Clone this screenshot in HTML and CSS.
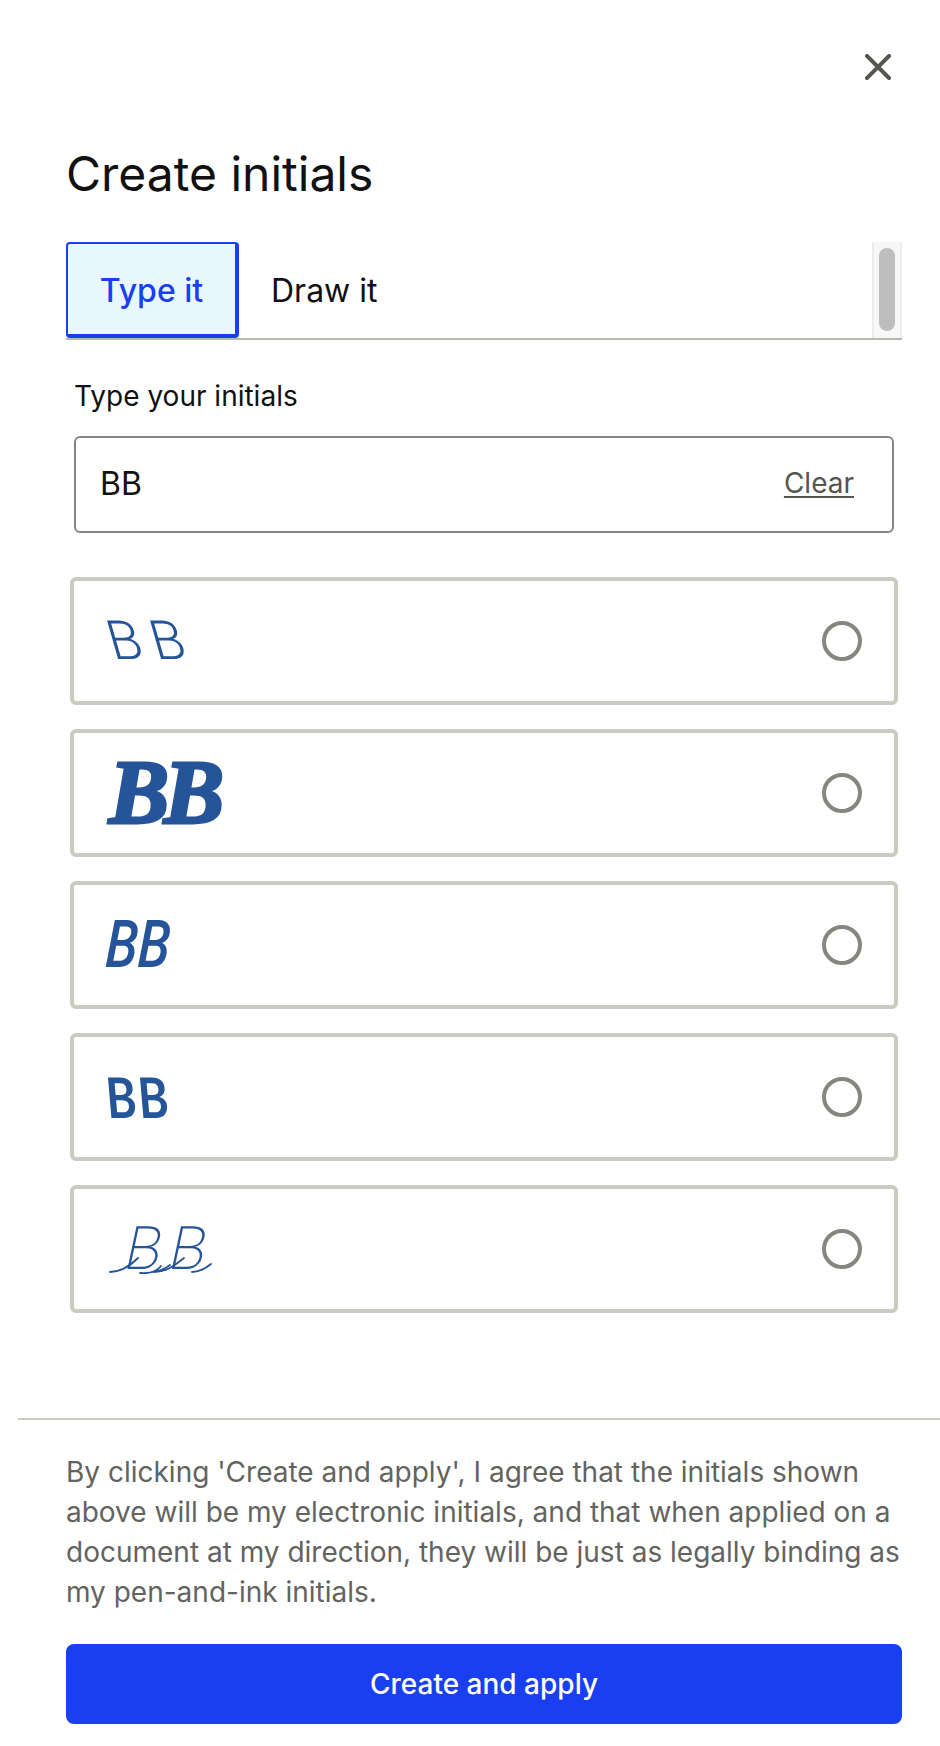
FILE: index.html
```html
<!DOCTYPE html>
<html lang="en">
<head>
<meta charset="utf-8">
<title>Create initials</title>
<link rel="stylesheet" href="styles.css">
</head>
<body>
<main class="dialog">
  <div class="top">
    <button class="close" aria-label="Close">
      <svg class="close-icon" viewBox="0 0 26 26" width="26" height="26"><path d="M2 2 24 24M24 2 2 24"/></svg>
    </button>
  </div>
  <h1 class="title">Create initials</h1>
  <div class="tabs">
    <button class="tab tab-active">Type it</button>
    <button class="tab">Draw it</button>
    <div class="scrollbar"><div class="thumb"></div></div>
  </div>
  <div class="panel">
    <label class="label">Type your initials</label>
    <div class="input">
      <span class="value">BB</span>
      <a class="clear">Clear</a>
    </div>
  </div>
  <ul class="options">
    <li class="option"><span class="sig sig1">BB</span><span class="radio"></span></li>
    <li class="option"><span class="sig sig2">BB</span><span class="radio"></span></li>
    <li class="option"><span class="sig sig3">BB</span><span class="radio"></span></li>
    <li class="option"><span class="sig sig4">BB</span><span class="radio"></span></li>
    <li class="option">
      <span class="sig-wrap">
        <span class="sig sig5">BB</span>
        <svg class="swash" viewBox="0 0 104 44" width="104" height="44"><path d="M2 42C12 42 20 38 30 28M46 42C52 41 58 38 62 35M46 42C58 42 66 36 76 28M84 42C92 42 98 38 103 34M32 43C44 44 50 40 53 36"/></svg>
      </span>
      <span class="radio"></span>
    </li>
  </ul>
  <footer class="footer">
    <p class="legal">By clicking 'Create and apply', I agree that the initials shown above will be my electronic initials, and that when applied on a document at my direction, they will be just as legally binding as my pen-and-ink initials.</p>
    <button class="primary">Create and apply</button>
  </footer>
</main>
</body>
</html>
```
FILE: styles.css
```css
* { box-sizing: border-box; }
html, body { margin: 0; padding: 0; background: #fff; }
body { font-family: Inter, "Liberation Sans", sans-serif; color: #111; }
.dialog { width: 940px; height: 1746px; overflow: hidden; display: flex; flex-direction: column; padding: 0 38px 0 66px; }
.top { height: 140px; display: flex; justify-content: flex-end; align-items: flex-start; padding-top: 54px; padding-right: 11px; }
.close { border: 0; background: none; padding: 0; width: 26px; height: 26px; display: block; }
.close-icon { display: block; fill: none; stroke: #55564f; stroke-width: 4; stroke-linecap: square; }
.title { margin: 0; height: 102px; font-size: 48px; line-height: 68px; font-weight: 400; color: #111; }
.tabs { display: flex; height: 98px; border-bottom: 2px solid #b8b8b0; }
.tab { border: 0; background: none; font: inherit; font-size: 32px; color: #111; padding: 0 32px; height: 96px; }
.tab-active { width: 173px; padding: 2px 0 0; background: #e9f7ff; color: #1a3ff0; font-weight: 500; border-style: solid; border-color: #1a3ff0; border-width: 2px 4px 4px 2px; border-radius: 4px; }
.scrollbar { margin-left: auto; width: 30px; height: 96px; background: #f7f7f7; border-left: 2px solid #ececec; border-right: 2px solid #ececec; display: flex; justify-content: center; padding-top: 6px; }
.thumb { width: 16px; height: 83px; border-radius: 8px; background: #bebebe; }
.panel { padding: 0 8px 0 7px; }
.label { display: block; margin-top: 39px; margin-left: 1px; height: 57px; font-size: 28px; line-height: 34px; color: #111; }
.input { height: 97px; margin-left: 1px; border: 2px solid #868680; border-radius: 6px; display: flex; align-items: center; justify-content: space-between; padding: 0 38px 2px 24px; }
.value { font-size: 32px; color: #111; }
.clear { font-size: 28px; color: #55564f; margin-bottom: 2px; text-decoration: underline; text-underline-offset: 3px; text-decoration-thickness: 2px; }
.options { list-style: none; margin: 44px 0 0 4px; padding: 0; width: 828px; display: flex; flex-direction: column; gap: 24px; }
.option { height: 128px; border: 4px solid #cbcbc1; border-radius: 6px; display: flex; align-items: center; justify-content: space-between; padding: 0 32px; }
.radio { width: 40px; height: 40px; border: 4px solid #868680; border-radius: 50%; }
.sig { color: #265499; display: block; line-height: 1; transform-origin: left center; }
.sig1 { font-family: Roboto, sans-serif; font-weight: 300; font-size: 54px; letter-spacing: 10px; margin-left: 2px; transform: skewX(16deg); }
.sig2 { font-family: "Liberation Serif", serif; font-weight: 700; font-style: italic; font-size: 90px; -webkit-text-stroke: 3px #265499; letter-spacing: -5px; margin-left: 3px; }
.sig3 { font-family: Roboto, sans-serif; font-weight: 500; font-style: italic; font-size: 66px; transform: scaleX(.8) skewX(-4deg); }
.sig4 { font-family: Lato, sans-serif; font-weight: 700; font-size: 56px; letter-spacing: 2px; transform: scaleX(.82) skewX(6deg); }
.sig-wrap { display: block; position: relative; margin-left: 2px; }
.sig5 { font-family: Roboto, sans-serif; font-weight: 200; font-size: 60px; letter-spacing: 8px; margin-left: 18px; transform: skewX(-12deg); }
.swash { position: absolute; left: 0; bottom: 5px; fill: none; stroke: #265499; stroke-width: 1.8; stroke-linecap: round; }
.footer { margin: 105px -38px 0 -48px; padding: 0 38px 0 48px; border-top: 2px solid #cbcbc1; }
.legal { margin: 32px 0 0; font-size: 28px; line-height: 40px; color: #636360; }
.primary { display: block; margin-top: 32px; width: 100%; height: 80px; border: 0; border-radius: 8px; background: #1a3ff0; color: #fff; font: inherit; font-size: 28px; font-weight: 500; }
```
